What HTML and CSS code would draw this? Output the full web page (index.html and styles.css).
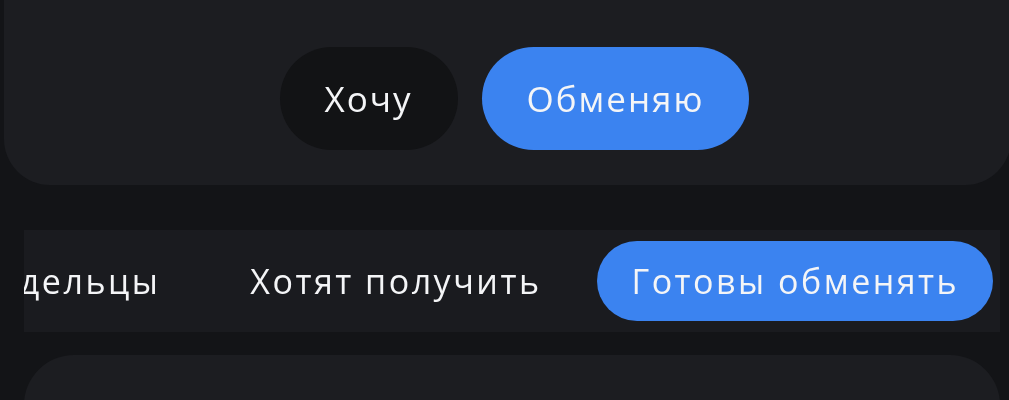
FILE: index.html
```html
<!DOCTYPE html>
<html lang="ru">
<head>
    <meta charset="UTF-8">
    <meta name="viewport" content="width=device-width, initial-scale=1.0">
    <title>Обмен</title>
    <link rel="stylesheet" href="styles.css">
</head>
<body>
    <div class="header-card">
        <div class="mode-switch">
            <button type="button" class="mode-btn">Хочу</button>
            <button type="button" class="mode-btn active">Обменяю</button>
        </div>
    </div>

    <div class="tabs" id="tabs">
        <div class="tabs-track">
            <button type="button" class="tab">Владельцы</button>
            <button type="button" class="tab">Хотят получить</button>
            <button type="button" class="tab active">Готовы обменять</button>
        </div>
    </div>

    <div class="list-card"></div>

    <script>
        // keep the selected tab in view
        const tabs = document.getElementById('tabs');
        tabs.scrollLeft = tabs.scrollWidth;
    </script>
</body>
</html>
```

FILE: styles.css
```css
body {
    margin: 0;
    background: #131417;
    font-family: "Open Sans", Roboto, sans-serif;
    color: #f4f5f7;
    overflow: hidden;
}
button {
    font-family: inherit;
    color: inherit;
    border: none;
    cursor: pointer;
}
.header-card {
    margin: 0 -2px 0 4px;
    height: 185px;
    box-sizing: border-box;
    padding-top: 47px;
    background: #1c1d21;
    border-radius: 0 0 46px 46px;
}
.mode-switch {
    display: flex;
    justify-content: center;
    gap: 24px;
    padding-left: 14px;
}
.mode-btn {
    height: 103px;
    padding: 0 45px;
    border-radius: 52px;
    background: #121315;
    font-size: 35px;
    letter-spacing: 2px;
}
.mode-btn.active {
    background: #3b83f0;
}
.tabs {
    margin: 45px 9px 0 24px;
    height: 102px;
    background: #1a1b1f;
    overflow-x: auto;
    scrollbar-width: none;
}
.tabs-track {
    display: flex;
    align-items: center;
    gap: 22px;
    height: 100%;
    padding-right: 7px;
    width: max-content;
}
.tab {
    height: 80px;
    padding: 0 34px;
    border-radius: 40px;
    background: none;
    font-size: 34px;
    letter-spacing: 2.5px;
    white-space: nowrap;
}
.tab.active {
    background: #3b83f0;
}
.list-card {
    margin: 23px 9px 0 24px;
    height: 120px;
    background: #1c1d21;
    border-radius: 50px;
}
```
